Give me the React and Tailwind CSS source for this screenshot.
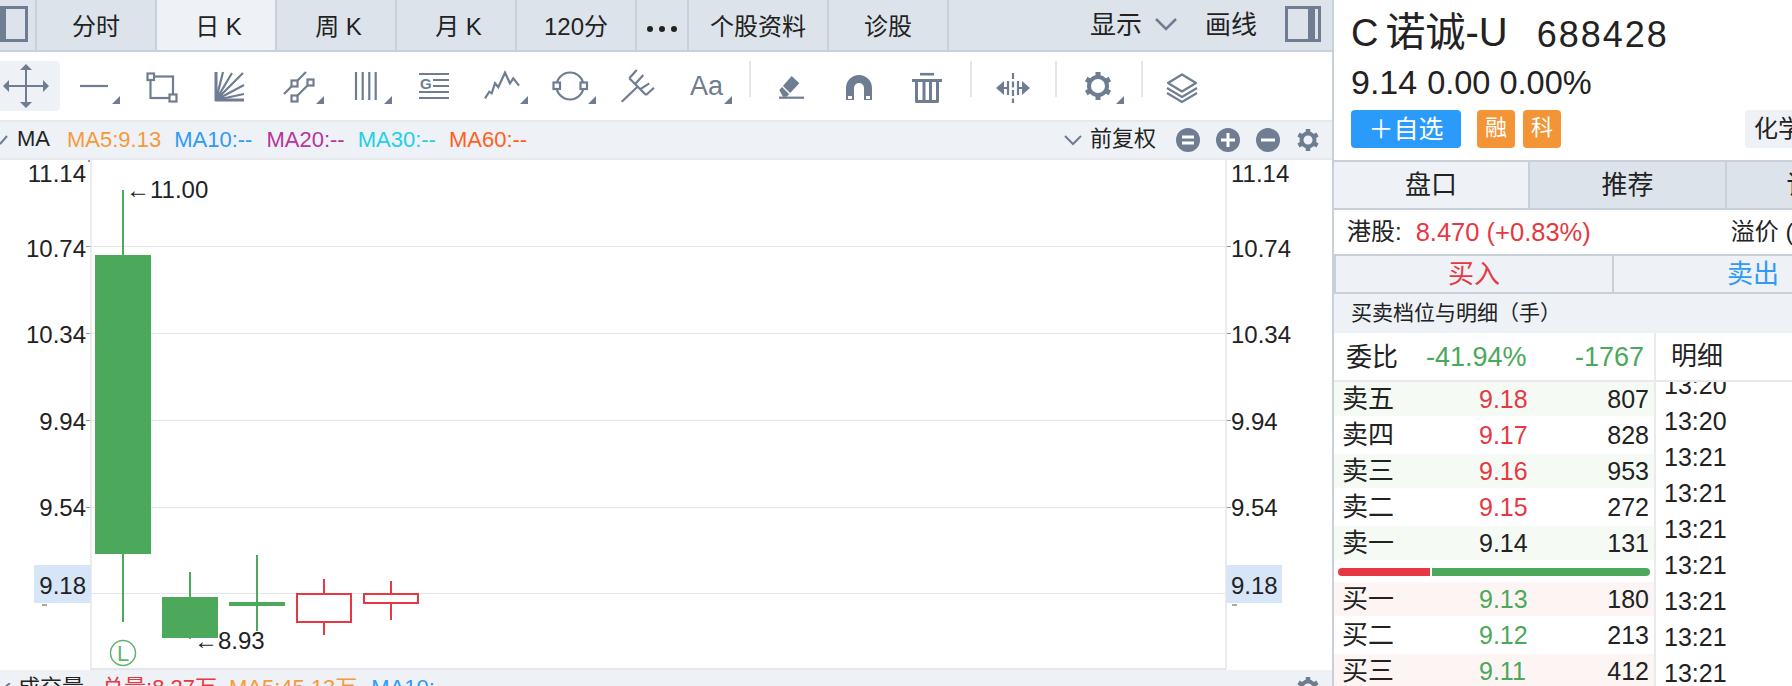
const SLATE = '#6e7d91'
const GREEN = '#4ca85a'
const RED = '#e63843'

const TABS = [
  { name: '分时', cls: '' },
  { name: '日 K', cls: 'pl-[5px] bg-[#eef1f5]' },
  { name: '周 K', cls: 'pl-[5px]' },
  { name: '月 K', cls: 'pl-[5px]' },
  { name: '120分', cls: '' },
]

const ASKS = [
  { label: '卖五', price: '9.18', qty: '807', up: true, shade: true },
  { label: '卖四', price: '9.17', qty: '828', up: true },
  { label: '卖三', price: '9.16', qty: '953', up: true, shade: true },
  { label: '卖二', price: '9.15', qty: '272', up: true },
  { label: '卖一', price: '9.14', qty: '131', flat: true, shade: true },
]

const BIDS = [
  { label: '买一', price: '9.13', qty: '180', shade: true },
  { label: '买二', price: '9.12', qty: '213' },
  { label: '买三', price: '9.11', qty: '412', shade: true },
]

const TIMES = ['13:20', '13:20', '13:21', '13:21', '13:21', '13:21', '13:21', '13:21', '13:21']

const AXIS = [
  { v: '11.14', y: 13 },
  { v: '10.74', y: 88 },
  { v: '10.34', y: 174 },
  { v: '9.94', y: 261 },
  { v: '9.54', y: 347 },
  { v: '9.18', y: 425 },
]

const GRID = [86.5, 173.5, 260.5, 347.5, 433.5]

function Corner() {
  return <path d="M52 43h8v-8z" fill={SLATE} />
}

function Tool({ children, corner }) {
  return (
    <svg viewBox="0 0 68 50" className="w-[68px] h-[50px] shrink-0" fill="none" stroke={SLATE} strokeWidth="2.2">
      {children}
      {corner && <g stroke="none"><Corner /></g>}
    </svg>
  )
}

function Sep({ ml }) {
  return <div className={`w-[2px] h-[36px] bg-[#e3e5e8] shrink-0 ${ml}`} />
}

function Toolbar() {
  return (
    <div className="h-[68px] pt-[9px] flex bg-white">
      <div className="w-[60px] h-[50px] bg-[#eef1f5] rounded-r-[4px] shrink-0">
        <svg viewBox="0 0 60 50" className="w-[60px] h-[50px]" fill={SLATE} stroke="none">
          <path d="M25 8h2v34h-2zM9 24h34v2H9z" />
          <path d="M26 3l6 6H20zM26 47l-6-6h12zM3 25l6-6v12zM49 25l-6 6V19z" />
        </svg>
      </div>
      <Tool corner><path d="M20 25h28" /></Tool>
      <Tool>
        <rect x="22.5" y="15.5" width="22.5" height="21.5" />
        <rect x="19.5" y="12.5" width="6.5" height="6.5" fill="#fff" />
        <rect x="41.5" y="33.5" width="7" height="7" fill="#fff" />
      </Tool>
      <Tool>
        <path d="M20 11v29M19 39h29" strokeWidth="3" />
        <path d="M20 39L27 11M20 39L36 12M20 39L47 12M20 39L48 24M20 39L48 33" />
      </Tool>
      <Tool corner>
        <path d="M20 33L42 11M33 35L44 24" />
        <rect x="27.5" y="19.5" width="6" height="6" fill="#fff" />
        <rect x="43.5" y="18.5" width="6" height="6" fill="#fff" />
        <rect x="27.5" y="34.5" width="6" height="6" fill="#fff" />
      </Tool>
      <Tool corner><path d="M24 11v28M30.7 11v28M37.3 11v28M43.7 11v28" /></Tool>
      <Tool>
        <path d="M19 13h30M33 19h16M33 25h16M19 31h30M19 37h30" />
        <text x="20" y="28" fontFamily="'Liberation Sans',sans-serif" fontWeight="700" fontSize="15" fill={SLATE} stroke="none">G</text>
      </Tool>
      <Tool corner>
        <path d="M17 37.3L21.3 30.7L23.7 32.3L27 22.3L30.3 26.3L37 11.7L42 22.3L45.3 17.3L51 24.7" />
      </Tool>
      <Tool corner>
        <circle cx="34" cy="25" r="13.5" />
        <rect x="17.5" y="21.5" width="6.5" height="6.5" fill="#fff" />
        <rect x="44.5" y="21.5" width="6.5" height="6.5" fill="#fff" />
      </Tool>
      <Tool>
        <path d="M17.7 40.7L34.3 25M25.3 17.3L42 34M25.3 17.3L32.7 9M31 23.3L39.3 14M36 28.3L45.3 22.3M42 34L50 26.7" />
      </Tool>
      <Tool corner>
        <text x="18" y="34" fontFamily="'Liberation Sans',sans-serif" fontSize="27" fill={SLATE} stroke="none">Aa</text>
      </Tool>
      <Sep ml="ml-[9px]" />
      <div className="w-[6px] shrink-0" />
      <Tool>
        <path d="M22 36.7h25" />
        <path d="M22.3 29L34.7 15L42.3 22.3L29.7 35.7H26z" fill={SLATE} stroke="none" />
        <path d="M25 25l8 8" stroke="#fff" strokeWidth="1.5" />
      </Tool>
      <Tool>
        <path d="M21 39V27a13 13 0 0 1 26 0V39H39V27a5 5 0 0 0-10 0V39z" fill={SLATE} stroke="none" />
        <path d="M23 35h4v3h-4zM41 35h4v3h-4z" fill="#fff" stroke="none" />
      </Tool>
      <Tool>
        <path d="M27 13.2h14" strokeWidth="2.6" />
        <path d="M19 19.5h30" strokeWidth="3" />
        <path d="M23.5 21v19.5h21V21M31 21v19M37.5 21v19" strokeWidth="3" strokeLinejoin="round" />
      </Tool>
      <Sep ml="ml-[9px]" />
      <div className="w-[6px] shrink-0" />
      <Tool>
        <path d="M35 12v30" strokeDasharray="6 2.5" />
        <path d="M18 27l8-7v14zM52 27l-8-7v14z" fill={SLATE} stroke="none" />
        <path d="M26 27h4M40 27h4M30 20v14M40 20v14" />
      </Tool>
      <Sep ml="ml-[9px]" />
      <div className="w-[7px] shrink-0" />
      <Tool corner>
        <circle cx="34" cy="25" r="9" strokeWidth="4" />
        <path d="M34 11v4M34 35v4M45.800 18l-3.400 2M25.600 30l-3.400 2M22.200 18l3.400 2M42.400 30l3.400 2" strokeWidth="5" />
      </Tool>
      <Sep ml="ml-[9px]" />
      <div className="w-[5px] shrink-0" />
      <Tool>
        <path d="M34 13.500L48 22 34 30.500 20 22z" strokeLinejoin="round" />
        <path d="M19 27l15 9 15-9M19 32l15 9 15-9" />
      </Tool>
    </div>
  )
}

function RoundBtn({ d }) {
  return (
    <svg viewBox="0 0 24 24" className="w-[24px] h-[24px] shrink-0">
      <circle cx="12" cy="12" r="12" fill={SLATE} />
      <path d={d} stroke="#fff" strokeWidth="3" fill="none" />
    </svg>
  )
}

function SmallGear() {
  return (
    <svg viewBox="0 0 24 24" className="w-[24px] h-[24px] shrink-0" fill="none" stroke={SLATE}>
      <circle cx="12" cy="12" r="6.5" strokeWidth="4" />
      <path d="M12 1v5M12 18v5M2.500 6.500l4.300 2.500M17.200 15l4.300 2.500M2.500 17.500L6.800 15M17.200 9l4.300-2.500" strokeWidth="4.500" />
    </svg>
  )
}

function IndicatorRow() {
  return (
    <div className="h-[40px] border-y-2 border-[#e6e8eb] bg-[#eef1f5] flex items-center text-[22px] leading-[36px] whitespace-nowrap">
      <svg viewBox="0 0 8 10" className="w-[8px] h-[10px] shrink-0">
        <path d="M0 9L7 1" stroke={SLATE} strokeWidth="2" />
      </svg>
      <span className="ml-[9px] text-[#222] -mt-[2px]">MA</span>
      <span className="ml-[17px] text-[#f59a3a]">MA5:9.13</span>
      <span className="ml-[13px] text-[#2f9bf5]">MA10:--</span>
      <span className="ml-[14px] text-[#b7359c]">MA20:--</span>
      <span className="ml-[13px] text-[#1fd0e6]">MA30:--</span>
      <span className="ml-[13px] text-[#ff5f1f]">MA60:--</span>
      <svg viewBox="0 0 18 12" className="ml-auto w-[18px] h-[12px] shrink-0">
        <path d="M1 2l8 8 8-8" fill="none" stroke={SLATE} strokeWidth="2" />
      </svg>
      <span className="ml-[8px] text-[#222] -mt-[3px]">前复权</span>
      <div className="ml-[20px] mr-[12px] flex gap-[16px]">
        <RoundBtn d="M6 9h12M6 15h12" />
        <RoundBtn d="M5 12h14M12 5v14" />
        <RoundBtn d="M5 12h14" />
        <SmallGear />
      </div>
    </div>
  )
}

function Wick({ x, y1, y2, color }) {
  return <line x1={x} x2={x} y1={y1} y2={y2} stroke={color} strokeWidth="2" />
}

function Chart() {
  const txt = { fontSize: 24, fill: '#222' }
  return (
    <div className="h-[510px] bg-white">
      <svg viewBox="0 0 1332 510" className="w-[1332px] h-[510px]">
        {GRID.map((y) => (
          <g key={y}>
            <line x1="91" x2="1226" y1={y} y2={y} stroke="#e4e6e9" />
            <line x1="86" x2="91" y1={y} y2={y} stroke="#999" />
            <line x1="1226" x2="1231" y1={y} y2={y} stroke="#999" />
          </g>
        ))}
        <rect x="34" y="405" width="57" height="38" fill="#d6e6f8" />
        <rect x="1226" y="405" width="56" height="38" fill="#d6e6f8" />
        <rect x="42" y="444" width="5" height="2" fill="#aaa" />
        <rect x="1232" y="444" width="5" height="2" fill="#aaa" />
        <line x1="91" x2="91" y1="0" y2="509" stroke="#e4e6e9" strokeWidth="1.5" />
        <line x1="1226" x2="1226" y1="0" y2="509" stroke="#e4e6e9" strokeWidth="1.5" />
        <line x1="89" x2="89" y1="0" y2="2" stroke="#333" />
        <line x1="90" x2="1226" y1="509" y2="509" stroke="#e4e6e9" strokeWidth="2" />

        <Wick x="123" y1="30" y2="462" color={GREEN} />
        <rect x="95" y="95" width="56" height="299" fill={GREEN} />
        <Wick x="190" y1="412" y2="479" color={GREEN} />
        <rect x="162" y="437" width="56" height="41" fill={GREEN} />
        <Wick x="257" y1="395" y2="471" color={GREEN} />
        <rect x="229" y="442" width="56" height="4" fill={GREEN} />
        <Wick x="324" y1="419" y2="475" color={RED} />
        <rect x="297" y="434" width="54" height="28" fill="#fff" stroke={RED} strokeWidth="2" />
        <Wick x="391" y1="421" y2="460" color={RED} />
        <rect x="364" y="434" width="54" height="9" fill="#fff" stroke={RED} strokeWidth="2" />

        <circle cx="123" cy="493" r="12.500" fill="#fff" stroke="#5fb56c" strokeWidth="1.5" />
        <text x="123" y="501" textAnchor="middle" fontSize="22" fill="#5fb56c">L</text>

        {AXIS.map((a) => (
          <g key={a.v} {...txt}>
            <text x="86" y={a.y + 8.5} textAnchor="end">{a.v}</text>
            <text x="1231" y={a.y + 8.5}>{a.v}</text>
          </g>
        ))}
        <text x="126" y="37.500" {...txt}>←11.00</text>
        <text x="194" y="488.500" {...txt}>←8.93</text>
      </svg>
    </div>
  )
}

function VolumeRow() {
  return (
    <div className="h-[16px] overflow-hidden bg-[#eef1f5] flex items-start text-[22px] leading-[30px] whitespace-nowrap pt-[3px]">
      <svg viewBox="0 0 8 10" className="w-[8px] h-[10px] mt-[10px] ml-[3px] shrink-0">
        <path d="M7 0L1 5" stroke={SLATE} strokeWidth="2" />
      </svg>
      <span className="ml-[7px] text-[#222]">成交量</span>
      <span className="ml-[18px] text-[#e63843]">总量:8.27万</span>
      <span className="ml-[12px] text-[#f59a3a]">MA5:45.13万</span>
      <span className="ml-[14px] text-[#2f9bf5]">MA10:--</span>
      <div className="ml-auto mr-[12px] mt-[3px]"><SmallGear /></div>
    </div>
  )
}

function QuoteRow({ row, shade }) {
  const color = row.flat ? 'text-[#222]' : row.up ? 'text-[#e63843]' : 'text-[#4ca85a]'
  return (
    <div className={`h-[34px] mb-[2px] flex items-center ${row.shade ? shade : ''}`}>
      <span className="w-[145px] pl-[8px] text-[26px]">{row.label}</span>
      <span className={color}>{row.price}</span>
      <span className="flex-1 text-right pr-[5px]">{row.qty}</span>
    </div>
  )
}

function RightPanel() {
  return (
    <div className="w-[590px] shrink-0 bg-white text-[#222] whitespace-nowrap">
      <div className="h-[160px] pt-[10px] pl-[17px]">
        <div className="flex items-baseline h-[44px] leading-[44px]">
          <span className="text-[38px]">C</span>
          <span className="ml-[7px] text-[40px]">诺诚-U</span>
          <span className="ml-[29px] text-[36px] tracking-[2px] translate-y-[1px]">688428</span>
        </div>
        <div className="mt-[6px] h-[44px] leading-[44px] flex items-baseline">
          <span className="text-[34px]">9.14</span>
          <span className="ml-[10px] text-[32.500px]">0.00 0.00%</span>
        </div>
        <div className="mt-[6px] flex">
          <div className="w-[110px] h-[38px] bg-[#2b9bfb] rounded-[4px] text-white text-[25px] leading-[38px] text-center">＋自选</div>
          <div className="ml-[16px] w-[38px] h-[38px] bg-[#f39537] rounded-[4px] text-white text-[22px] leading-[36px] text-center">融</div>
          <div className="ml-[8px] w-[38px] h-[38px] bg-[#f39537] rounded-[4px] text-white text-[22px] leading-[36px] text-center">科</div>
          <div className="ml-[184px] w-[100px] h-[38px] bg-[#eef1f5] rounded-[4px] text-[24px] leading-[38px] pl-[9px]">化学制药</div>
        </div>
      </div>

      <div className="h-[50px] border-y-2 border-[#c8d0da] flex text-[26px] leading-[46px] text-center">
        <div className="w-[196px] bg-[#eef1f5] border-r-2 border-[#c8d0da]">盘口</div>
        <div className="w-[197px] bg-[#dde3ea] border-r-2 border-[#c8d0da]">推荐</div>
        <div className="w-[197px] bg-[#dde3ea]">讨论区</div>
      </div>

      <div className="h-[44px] flex items-center text-[25.500px] pl-[13px]">
        <span className="text-[24px]">港股:</span>
        <span className="ml-[14px] text-[#e63843]">8.470 (+0.83%)</span>
        <span className="ml-[140px] text-[24px]">溢价 (</span>
      </div>

      <div className="h-[40px] border-y-2 border-[#c8d0da] flex bg-[#eef1f5] text-[26px] leading-[36px] text-center">
        <div className="w-[280px] border-x-2 border-[#c8d0da] text-[#e63843]">买入</div>
        <div className="w-[278px] text-[#2f9bf5]">卖出</div>
      </div>

      <div className="h-[39px] bg-[#eef1f5] pl-[17px] text-[21px] leading-[38px]">买卖档位与明细（手）</div>

      <div className="flex">
        <div className="w-[320px] shrink-0 text-[25px] leading-[34px]">
          <div className="h-[49px] border-b-2 border-[#e8eaec] flex items-center leading-[46px] text-[27px]">
            <span className="pl-[12px] w-[92px] text-[26px]">委比</span>
            <span className="text-[#4ca85a]">-41.94%</span>
            <span className="flex-1 text-right pr-[10px] text-[#4ca85a]">-1767</span>
          </div>
          {ASKS.map((r) => <QuoteRow key={r.label} row={r} shade="bg-[#f5faf5]" />)}
          <div className="h-[20px] pt-[6px] px-[4px] flex gap-[2px]">
            <div className="w-[92px] h-[8px] rounded-l-full bg-[#e63843]" />
            <div className="flex-1 h-[8px] rounded-r-full bg-[#4ca85a]" />
          </div>
          {BIDS.map((r) => <QuoteRow key={r.label} row={r} shade="bg-[#fdf5f4]" />)}
        </div>
        <div className="w-[2px] h-[353px] bg-[#e8eaec] shrink-0" />
        <div className="flex-1 h-[353px] overflow-hidden text-[25px]">
          <div className="h-[49px] border-b-2 border-[#e8eaec] pl-[15px] text-[26px] leading-[46px] bg-white relative z-10">明细</div>
          <div className="-mt-[15px] pl-[8px]">
            {TIMES.map((t, i) => <div key={i} className="h-[36px] leading-[36px]">{t}</div>)}
          </div>
        </div>
      </div>
    </div>
  )
}

export default function App() {
  return (
    <div className="w-[1792px] h-[686px] overflow-hidden flex bg-white font-['Liberation_Sans','Noto_Sans_CJK_SC',sans-serif]">
      <div className="w-[1332px] shrink-0 flex flex-col">
        <div className="h-[52px] border-b-2 border-[#c8d0da] bg-[#dde3ea] flex text-[24px] leading-[54px] text-[#222] text-center">
          <div className="w-[37px] border-r-2 border-[#c8d0da] shrink-0">
            <svg viewBox="0 0 35 50" className="w-[35px] h-[50px]">
              <rect x="-9" y="7.500" width="35.500" height="33" fill="none" stroke={SLATE} strokeWidth="3" />
              <rect x="0" y="9" width="6" height="30" fill={SLATE} />
            </svg>
          </div>
          {TABS.map((t) => (
            <div key={t.name} className={`w-[120px] shrink-0 border-r-2 border-[#c8d0da] ${t.cls}`}>{t.name}</div>
          ))}
          <div className="w-[52px] shrink-0 border-r-2 border-[#c8d0da]">
            <svg viewBox="0 0 50 50" className="w-[50px] h-[50px]">
              <circle cx="13" cy="29" r="3" fill="#222" />
              <circle cx="25" cy="29" r="3" fill="#222" />
              <circle cx="37" cy="29" r="3" fill="#222" />
            </svg>
          </div>
          <div className="w-[140px] shrink-0 border-r-2 border-[#c8d0da]">个股资料</div>
          <div className="w-[120px] shrink-0 border-r-2 border-[#c8d0da]">诊股</div>
          <div className="flex-1 flex items-center justify-end leading-none text-[26px]">
            <span className="-mt-[1px]">显示</span>
            <svg viewBox="0 0 22 14" className="ml-[13px] w-[22px] h-[14px] -mt-[2px]">
              <path d="M1 2l10 10L21 2" fill="none" stroke={SLATE} strokeWidth="2.5" />
            </svg>
            <span className="ml-[28px] -mt-[1px]">画线</span>
            <svg viewBox="0 0 36 36" className="ml-[28px] mr-[11px] w-[36px] h-[36px] -mt-[2px]">
              <rect x="1.500" y="1.500" width="33" height="33" fill="none" stroke={SLATE} strokeWidth="3" />
              <rect x="23" y="3" width="7" height="30" fill={SLATE} />
            </svg>
          </div>
        </div>
        <Toolbar />
        <IndicatorRow />
        <Chart />
        <VolumeRow />
      </div>
      <div className="w-[2px] bg-[#c8d0da] shrink-0" />
      <RightPanel />
    </div>
  )
}
